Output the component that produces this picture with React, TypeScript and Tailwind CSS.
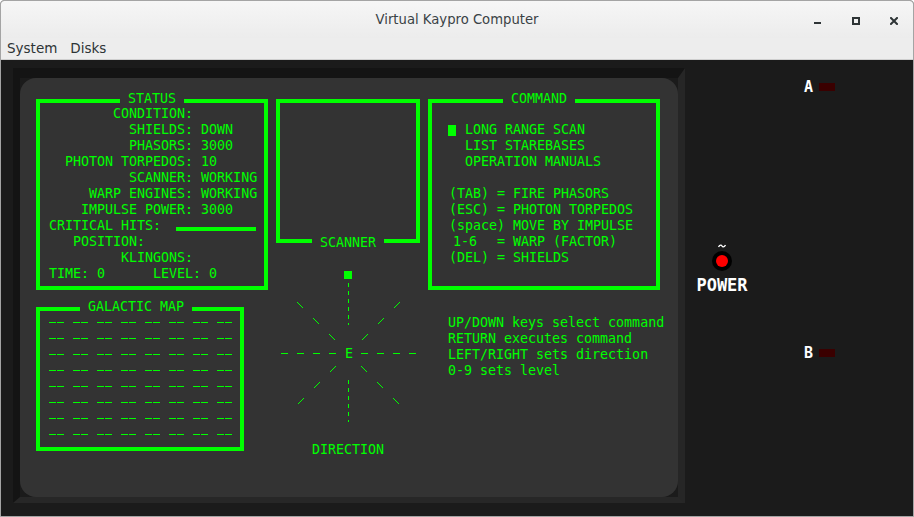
import React from "react";

const mono =
  "font-['DejaVu_Sans_Mono',monospace] text-[13.3px] leading-[16px] text-[#00ff00] whitespace-pre";

function Lines({ lines }: { lines: string[] }) {
  return (
    <>
      {lines.map((l, i) => (
        <div key={i} className={`${mono} h-[16px]`}>
          {l}
        </div>
      ))}
    </>
  );
}

function Compass() {
  const diag: React.ReactElement[] = [];
  const signs = [
    [-1, -1],
    [1, -1],
    [-1, 1],
    [1, 1],
  ];
  signs.forEach(([sx, sy], qi) => {
    [13, 29, 45].forEach((d, di) => {
      diag.push(
        <line
          key={`${qi}-${di}`}
          x1={72.5 + sx * d}
          y1={90.5 + sy * d}
          x2={72.5 + sx * (d + 6)}
          y2={90.5 + sy * (d + 6)}
          stroke="#00ff00"
          strokeWidth="1"
        />
      );
    });
  });
  return (
    <svg width="144" height="176" className="mt-[20px] block">
      <rect x="68" y="8" width="8" height="8" fill="#00ff00" />
      <g shapeRendering="crispEdges" stroke="#00ff00" strokeWidth="1">
        <line x1="72.5" y1="20" x2="72.5" y2="62" strokeDasharray="4 4" />
        <line x1="72.5" y1="117" x2="72.5" y2="159" strokeDasharray="4 4" />
        <line x1="5" y1="90.5" x2="61" y2="90.5" strokeDasharray="7 9" />
        <line x1="85" y1="90.5" x2="141" y2="90.5" strokeDasharray="7 9" />
      </g>
      <g shapeRendering="crispEdges">{diag}</g>
      <text
        x="73"
        y="95"
        textAnchor="middle"
        fontFamily="DejaVu Sans Mono, monospace"
        fontSize="13.3"
        fill="#00ff00"
      >
        E
      </text>
    </svg>
  );
}

function MapRow() {
  return (
    <div className="flex h-[16px] items-start gap-[8px]">
      {Array.from({ length: 8 }).map((_, i) => (
        <div key={i} className="mt-[9px] flex w-[16px] gap-[1px]">
          <div className="h-px w-[7px] bg-[#00ff00]" />
          <div className="h-px w-[7px] bg-[#00ff00]" />
        </div>
      ))}
    </div>
  );
}

export default function App() {
  return (
    <div className="flex h-[517px] w-[914px] flex-col overflow-hidden rounded-t-[4px] border border-[#a4a4a4] bg-[#1b1b1b]">
      {/* Title bar */}
      <div className="grid h-[37px] grid-cols-[1fr_auto_1fr] bg-gradient-to-b from-[#f6f6f6] to-[#ececec]">
        <div />
        <div className="flex items-center font-['DejaVu_Sans',sans-serif] text-[13.2px] text-[#3a4245]">
          Virtual Kaypro Computer
        </div>
        <div className="flex items-start justify-end gap-[30px] pr-[15px] pt-[16px]">
          <svg width="8" height="8" className="block">
            <rect x="0" y="5" width="7" height="2" fill="#2e3436" />
          </svg>
          <svg width="8" height="8" className="block">
            <rect x="1" y="1" width="6" height="6" fill="none" stroke="#2e3436" strokeWidth="2" />
          </svg>
          <svg width="8" height="8" className="block">
            <path d="M1 1 L7 7 M7 1 L1 7" stroke="#2e3436" strokeWidth="2" strokeLinecap="square" />
          </svg>
        </div>
      </div>
      {/* Menu bar */}
      <div className="flex h-[22px] gap-[13px] border-b border-[#cfcfcf] bg-[#ededed] pl-[6px] font-['DejaVu_Sans',sans-serif] text-[13.5px] leading-[21px] text-[#2e3436]">
        <span>System</span>
        <span>Disks</span>
      </div>
      {/* Main area */}
      <div className="flex flex-1 pl-[12px] pt-[8px]">
        <div className="h-[435px] w-[672px] border-b-[6px] border-l-[7px] border-r-[7px] border-t-[10px] border-b-[#272727] border-l-[#141414] border-r-[#262626] border-t-[#141414]">
          <div className="flex h-full w-full items-start gap-[8px] rounded-[16px] bg-[#333333] pl-[16px] pt-[21px]">
            {/* Left column */}
            <div className="w-[232px]">
              <div className="flex h-[4px] items-center">
                <div className="h-[4px] w-[84px] bg-[#00ff00]" />
                <span className={`${mono} -mt-[4px] px-[8px]`}>STATUS</span>
                <div className="h-[4px] flex-1 bg-[#00ff00]" />
              </div>
              <div className="border-x-4 border-b-4 border-[#00ff00] pb-[4px] pl-[9px] pt-[3px]">
                <Lines
                  lines={[
                    "        CONDITION:",
                    "          SHIELDS: DOWN",
                    "          PHASORS: 3000",
                    "  PHOTON TORPEDOS: 10",
                    "          SCANNER: WORKING",
                    "     WARP ENGINES: WORKING",
                    "    IMPULSE POWER: 3000",
                  ]}
                />
                <div className="flex h-[16px] items-start">
                  <span className={mono}>CRITICAL HITS:</span>
                  <div className="ml-[15px] mt-[9px] h-[4px] w-[80px] bg-[#00ff00]" />
                </div>
                <Lines
                  lines={["   POSITION:", "         KLINGONS:", "TIME: 0      LEVEL: 0"]}
                />
              </div>

              <div className="mt-[17px] w-[208px]">
                <div className="flex h-[4px] items-center">
                  <div className="h-[4px] w-[44px] bg-[#00ff00]" />
                  <span className={`${mono} -mt-[4px] px-[8px]`}>GALACTIC MAP</span>
                  <div className="h-[4px] flex-1 bg-[#00ff00]" />
                </div>
                <div className="border-x-4 border-b-4 border-[#00ff00] pb-[6px] pl-[9px] pt-[2px]">
                  {Array.from({ length: 8 }).map((_, i) => (
                    <MapRow key={i} />
                  ))}
                </div>
              </div>
            </div>

            {/* Middle column */}
            <div className="w-[144px]">
              <div className="h-[140px] border-x-4 border-t-4 border-[#00ff00]" />
              <div className="flex h-[4px] items-center">
                <div className="h-[4px] w-[36px] bg-[#00ff00]" />
                <span className={`${mono} mt-[4px] px-[8px]`}>SCANNER</span>
                <div className="h-[4px] flex-1 bg-[#00ff00]" />
              </div>
              <Compass />
              <div className={`${mono} mt-[3px] text-center`}>DIRECTION</div>
            </div>

            {/* Right column */}
            <div className="w-[232px]">
              <div className="flex h-[4px] items-center">
                <div className="h-[4px] w-[75px] bg-[#00ff00]" />
                <span className={`${mono} -mt-[4px] px-[8px]`}>COMMAND</span>
                <div className="h-[4px] flex-1 bg-[#00ff00]" />
              </div>
              <div className="border-x-4 border-b-4 border-[#00ff00] pb-[4px] pl-[9px] pt-[3px]">
                <div className="h-[16px]" />
                <div className="flex h-[16px] items-start">
                  <div className="ml-[7px] mt-[3px] h-[11px] w-[8px] bg-[#00ff00]" />
                  <span className={`${mono} ml-[9px]`}>LONG RANGE SCAN</span>
                </div>
                <Lines
                  lines={[
                    "   LIST STAREBASES",
                    "   OPERATION MANUALS",
                    "",
                    " (TAB) = FIRE PHASORS",
                    " (ESC) = PHOTON TORPEDOS",
                    " (space) MOVE BY IMPULSE",
                  ]}
                />
                <div className="flex h-[16px] items-start">
                  <span className={`${mono} ml-[12px]`}>1-6</span>
                  <span className={`${mono} ml-[20px]`}>= WARP (FACTOR)</span>
                </div>
                <Lines lines={[" (DEL) = SHIELDS", ""]} />
              </div>
              <div className="mt-[25px] pl-[20px]">
                <Lines
                  lines={[
                    "UP/DOWN keys select command",
                    "RETURN executes command",
                    "LEFT/RIGHT sets direction",
                    "0-9 sets level",
                  ]}
                />
              </div>
            </div>
          </div>
        </div>

        {/* Right panel */}
        <div className="flex flex-1 flex-col font-['DejaVu_Sans_Mono',monospace] font-bold text-white">
          <div className="ml-[119px] mt-[11px] flex h-[16px] items-center">
            <span className="text-[15px] leading-[16px]">A</span>
            <div className="ml-[6px] h-[8px] w-[16px] bg-[#3a0000]" />
          </div>
          <div className="ml-[12px] mt-[149px] flex w-[50px] flex-col items-center">
            <svg width="8" height="4" className="block">
              <path d="M0.5 3 C2 0.5 3.5 1 4 2 C4.5 3 6 3.5 7.5 1" fill="none" stroke="#ffffff" strokeWidth="1.3" />
            </svg>
            <div className="mt-[3px] flex h-[20px] w-[20px] items-center justify-center rounded-full bg-black">
              <div className="h-[12px] w-[12px] rounded-full bg-[#ff0000]" />
            </div>
            <span className="mt-[5px] text-[17px] leading-[18px]">POWER</span>
          </div>
          <div className="ml-[119px] mt-[51px] flex h-[16px] items-center">
            <span className="text-[15px] leading-[16px]">B</span>
            <div className="ml-[6px] h-[8px] w-[16px] bg-[#3a0000]" />
          </div>
        </div>
      </div>
    </div>
  );
}
